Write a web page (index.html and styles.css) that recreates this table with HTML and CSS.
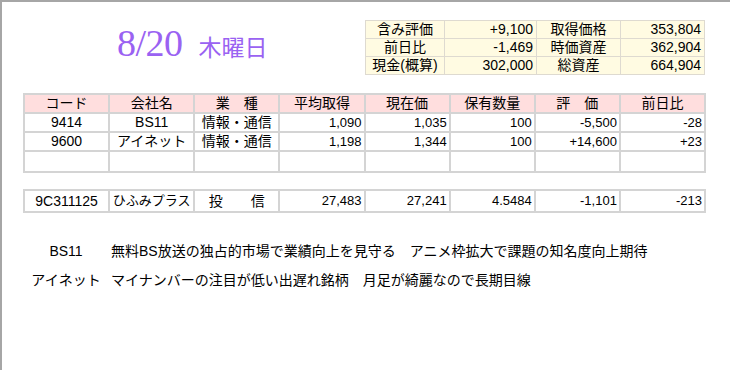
FILE: index.html
```html
<!DOCTYPE html>
<html lang="ja">
<head>
<meta charset="utf-8">
<link rel="stylesheet" href="styles.css">
</head>
<body>
<div class="frame">
  <div class="content">
    <div class="header">
      <div class="title"><span class="date">8/20</span><span class="dow">木曜日</span></div>
      <table class="summary">
        <tr><td class="lbl w1">含み評価</td><td class="num w2">+9,100</td><td class="lbl w3">取得価格</td><td class="num w4">353,804</td></tr>
        <tr><td class="lbl">前日比</td><td class="num">-1,469</td><td class="lbl">時価資産</td><td class="num">362,904</td></tr>
        <tr><td class="lbl">現金(概算)</td><td class="num">302,000</td><td class="lbl">総資産</td><td class="num">664,904</td></tr>
      </table>
    </div>

    <table class="grid main">
      <tr class="head">
        <td>コード</td><td>会社名</td><td>業　種</td><td>平均取得</td><td>現在価</td><td>保有数量</td><td>評　価</td><td>前日比</td>
      </tr>
      <tr>
        <td class="c code">9414</td><td class="c">BS11</td><td class="c">情報・通信</td><td class="num">1,090</td><td class="num">1,035</td><td class="num">100</td><td class="num">-5,500</td><td class="num">-28</td>
      </tr>
      <tr>
        <td class="c code">9600</td><td class="c">アイネット</td><td class="c">情報・通信</td><td class="num">1,198</td><td class="num">1,344</td><td class="num">100</td><td class="num">+14,600</td><td class="num">+23</td>
      </tr>
      <tr class="empty">
        <td></td><td></td><td></td><td></td><td></td><td></td><td></td><td></td>
      </tr>
    </table>

    <table class="grid fund">
      <tr>
        <td class="c code">9C311125</td><td class="c kana">ひふみプラス</td><td class="c">投　　信</td><td class="num">27,483</td><td class="num">27,241</td><td class="num">4.5484</td><td class="num">-1,101</td><td class="num">-213</td>
      </tr>
    </table>

    <div class="notes">
      <div class="nlabel">BS11</div><div class="ntext">無料BS放送の独占的市場で業績向上を見守る　アニメ枠拡大で課題の知名度向上期待</div>
      <div class="nlabel">アイネット</div><div class="ntext">マイナンバーの注目が低い出遅れ銘柄　月足が綺麗なので長期目線</div>
    </div>
  </div>
</div>
</body>
</html>
```

FILE: styles.css
```css
html, body {
  margin: 0;
  padding: 0;
  background: #ffffff;
}
body {
  font-family: "Liberation Sans", "Noto Sans CJK JP", sans-serif;
  color: #000;
}
.frame {
  width: 730px;
  height: 370px;
  box-sizing: border-box;
  border-top: 2px solid #a6a6a6;
  border-left: 2px solid #a6a6a6;
}
.content {
  margin-left: 21px;
  width: 682px;
}
.header {
  display: flex;
  justify-content: space-between;
  align-items: flex-start;
  padding-top: 18px;
  height: 73px;
}
.title {
  margin-left: 94px;
  margin-top: 1px;
  color: #9a62f2;
  display: flex;
  align-items: baseline;
}
.date {
  font-family: "Liberation Serif", "DejaVu Serif", serif;
  font-size: 38px;
  letter-spacing: -0.5px;
}
.dow {
  font-family: "Noto Sans CJK JP", sans-serif;
  font-size: 23px;
  margin-left: 16px;
}
.summary {
  border-collapse: separate;
  border-spacing: 1px;
  background: #dedad0;
  font-size: 14px;
  margin-right: 0;
}
.summary td {
  background: #fffbe2;
  height: 17px;
  padding: 0 3px;
  line-height: 17px;
}
.summary .lbl { text-align: center; }
.summary .num { text-align: right; }
.summary .w1 { width: 72px; }
.summary .w2 { width: 85px; }
.summary .w3 { width: 77px; }
.summary .w4 { width: 77px; }

.grid {
  border-collapse: separate;
  border-spacing: 2px;
  background: #d4d4d4;
  width: 683px;
  table-layout: fixed;
  font-size: 14px;
}
.grid td {
  background: #fff;
  height: 17px;
  line-height: 17px;
  padding: 0 2px;
  white-space: nowrap;
  overflow: hidden;
}
.grid .head td {
  background: #ffdede;
  text-align: center;
}
.grid .c { text-align: center; }
.grid .kana { font-size: 13px; padding: 0; }
.grid .num { text-align: right; font-size: 13px; }
.grid .empty td { height: 19px; }
.fund { margin-top: 16px; }
.fund td { height: 20px; line-height: 20px; }

.notes {
  display: grid;
  grid-template-columns: 72px auto;
  column-gap: 9px;
  row-gap: 12px;
  margin-top: 30px;
  margin-left: 7px;
  font-size: 14px;
  line-height: 17px;
}
.nlabel { text-align: center; }
.ntext { white-space: nowrap; }
```
